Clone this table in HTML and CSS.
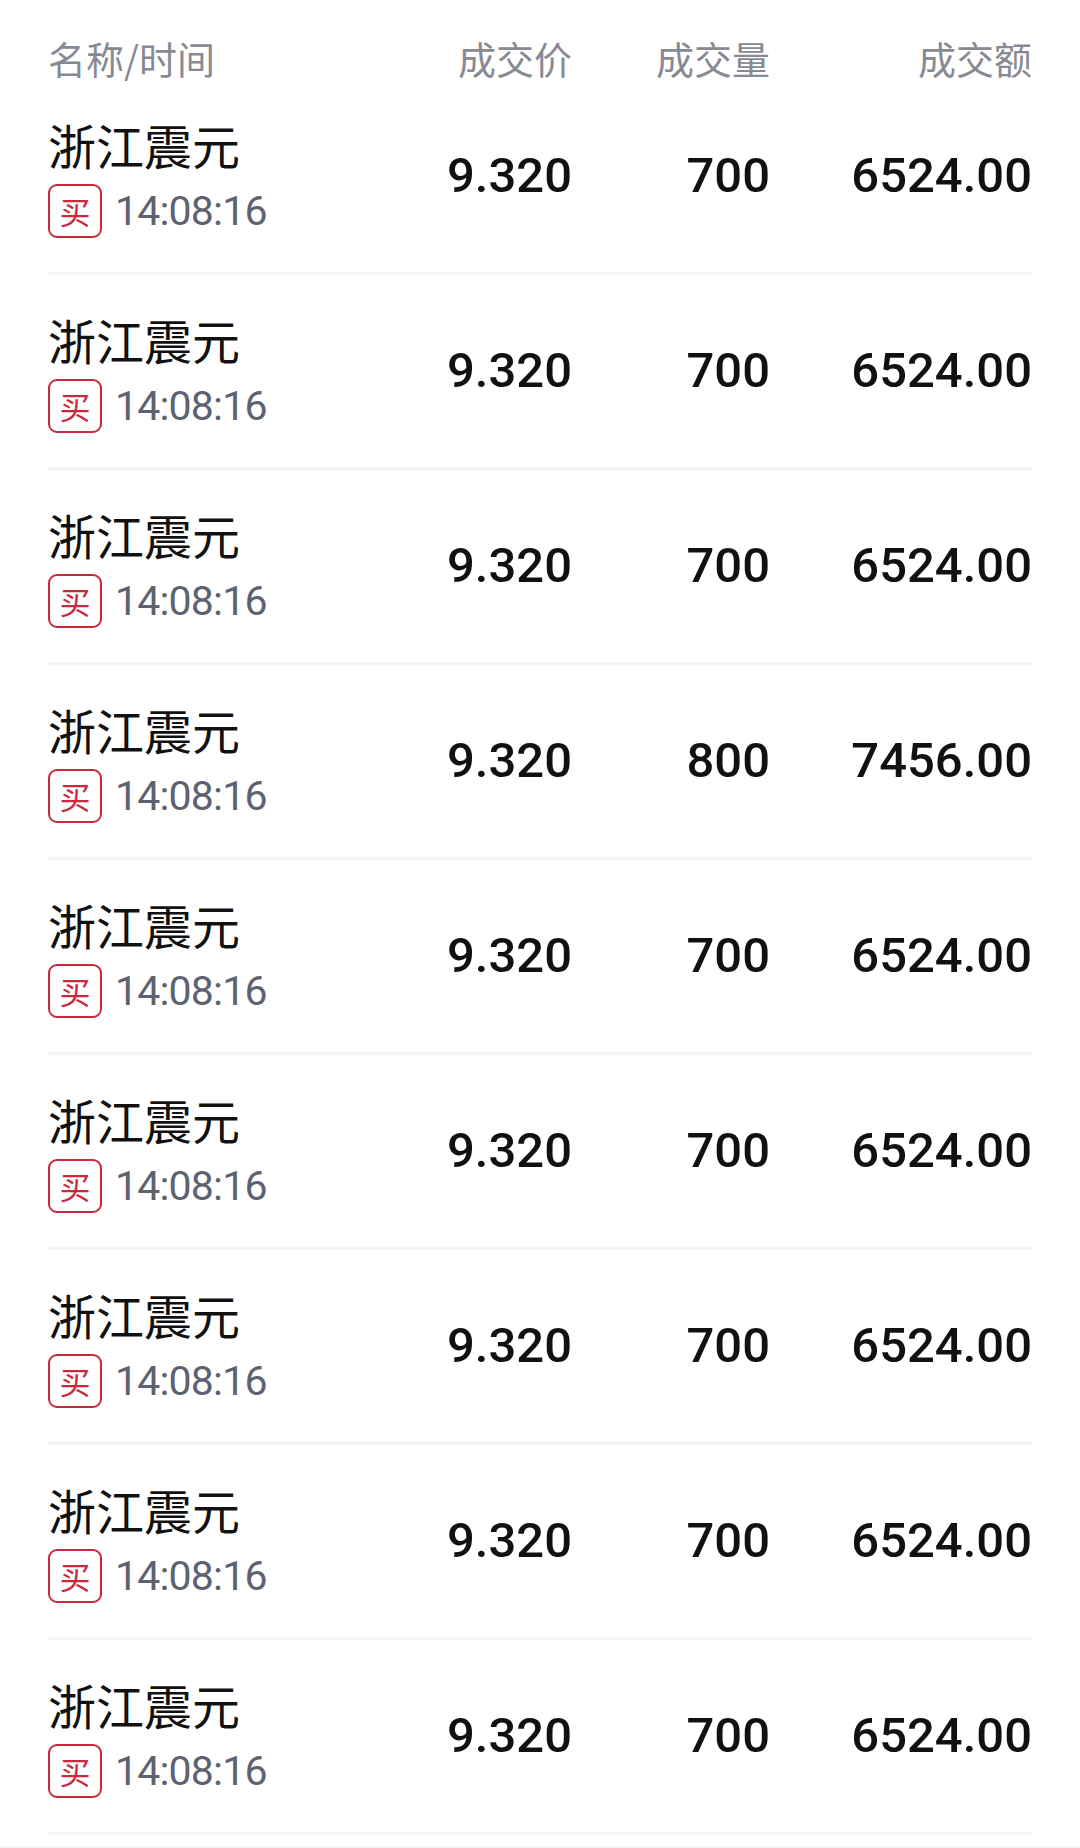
FILE: index.html
```html
<!DOCTYPE html>
<html lang="zh-CN">
<head>
<meta charset="utf-8">
<title>成交明细</title>
<link rel="stylesheet" href="styles.css">
</head>
<body>
<div class="page">
  <div class="head grid">
    <div class="h-name">名称/时间</div>
    <div class="num-h">成交价</div>
    <div class="num-h">成交量</div>
    <div class="num-h">成交额</div>
  </div>
  <div class="list">
    <div class="row grid">
      <div class="cell-name"><div class="name">浙江震元</div><div class="sub"><span class="badge">买</span><span class="time">14:08:16</span></div></div>
      <div class="num">9.320</div><div class="num">700</div><div class="num">6524.00</div>
    </div>
    <div class="row grid">
      <div class="cell-name"><div class="name">浙江震元</div><div class="sub"><span class="badge">买</span><span class="time">14:08:16</span></div></div>
      <div class="num">9.320</div><div class="num">700</div><div class="num">6524.00</div>
    </div>
    <div class="row grid">
      <div class="cell-name"><div class="name">浙江震元</div><div class="sub"><span class="badge">买</span><span class="time">14:08:16</span></div></div>
      <div class="num">9.320</div><div class="num">700</div><div class="num">6524.00</div>
    </div>
    <div class="row grid">
      <div class="cell-name"><div class="name">浙江震元</div><div class="sub"><span class="badge">买</span><span class="time">14:08:16</span></div></div>
      <div class="num">9.320</div><div class="num">800</div><div class="num">7456.00</div>
    </div>
    <div class="row grid">
      <div class="cell-name"><div class="name">浙江震元</div><div class="sub"><span class="badge">买</span><span class="time">14:08:16</span></div></div>
      <div class="num">9.320</div><div class="num">700</div><div class="num">6524.00</div>
    </div>
    <div class="row grid">
      <div class="cell-name"><div class="name">浙江震元</div><div class="sub"><span class="badge">买</span><span class="time">14:08:16</span></div></div>
      <div class="num">9.320</div><div class="num">700</div><div class="num">6524.00</div>
    </div>
    <div class="row grid">
      <div class="cell-name"><div class="name">浙江震元</div><div class="sub"><span class="badge">买</span><span class="time">14:08:16</span></div></div>
      <div class="num">9.320</div><div class="num">700</div><div class="num">6524.00</div>
    </div>
    <div class="row grid">
      <div class="cell-name"><div class="name">浙江震元</div><div class="sub"><span class="badge">买</span><span class="time">14:08:16</span></div></div>
      <div class="num">9.320</div><div class="num">700</div><div class="num">6524.00</div>
    </div>
    <div class="row grid">
      <div class="cell-name"><div class="name">浙江震元</div><div class="sub"><span class="badge">买</span><span class="time">14:08:16</span></div></div>
      <div class="num">9.320</div><div class="num">700</div><div class="num">6524.00</div>
    </div>
  </div>
</div>
</body>
</html>
```
FILE: styles.css
```css
html, body {
  margin: 0;
  padding: 0;
}
body {
  background: #f3f4f7;
  font-family: "Noto Sans CJK SC", "Noto Sans", sans-serif;
  color: #111111;
}
.page {
  background: #ffffff;
  padding: 0 48px 11px;
}
.grid {
  display: grid;
  grid-template-columns: 300px 224px 198px 262px;
}
.head {
  height: 80px;
  box-sizing: border-box;
  padding-top: 39px;
  font-size: 38px;
  line-height: 38px;
  color: #878a93;
}
.num-h {
  text-align: right;
}
.row {
  height: 195px;
  box-sizing: border-box;
  border-bottom: 3px solid #f3f4f8;
  align-items: center;
}
.cell-name {
  align-self: start;
  padding-top: 38px;
}
.name {
  font-size: 48px;
  line-height: 52px;
  margin-bottom: 14px;
  color: #111111;
}
.sub {
  display: flex;
  align-items: center;
  height: 54px;
}
.badge {
  width: 54px;
  height: 54px;
  box-sizing: border-box;
  border: 2px solid #c8293d;
  border-radius: 9px;
  color: #c8293d;
  font-size: 31px;
  line-height: 50px;
  text-align: center;
}
.time {
  margin-left: 13px;
  font-family: "Roboto", "Noto Sans", sans-serif;
  font-size: 41px;
  line-height: 54px;
  letter-spacing: -0.8px;
  color: #5d6271;
}
.num {
  text-align: right;
  font-family: "Roboto", "Noto Sans", sans-serif;
  font-weight: 500;
  font-size: 49px;
  line-height: 56px;
  color: #111111;
}
```
